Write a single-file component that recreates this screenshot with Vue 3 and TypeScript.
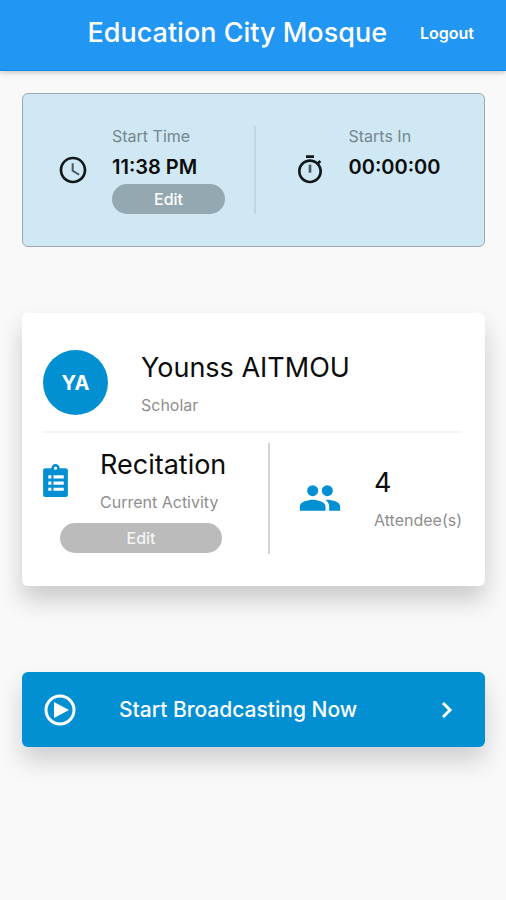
<script setup lang="ts">
import { ref } from 'vue'

const mosque = ref('Education City Mosque')
const startTime = ref('11:38 PM')
const countdown = ref('00:00:00')
const scholar = ref({ name: 'Younss AITMOU', initials: 'YA', role: 'Scholar' })
const activity = ref('Recitation')
const attendees = ref(4)
</script>

<template>
  <div class="screen">
    <header class="bar">
      <h1 class="title">{{ mosque }}</h1>
      <button class="logout" type="button">Logout</button>
    </header>

    <main class="content">
      <section class="schedule">
        <div class="slot">
          <svg class="icon" viewBox="0 0 24 24" aria-hidden="true">
            <path d="M11.99 2C6.47 2 2 6.48 2 12s4.47 10 9.99 10C17.52 22 22 17.52 22 12S17.52 2 11.99 2zM12 20c-4.42 0-8-3.58-8-8s3.58-8 8-8 8 3.58 8 8-3.58 8-8 8z" />
            <path class="hands" d="M12.5 7H11v6l5.25 3.15.75-1.23-4.5-2.67z" />
          </svg>
          <div class="details">
            <span class="caption">Start Time</span>
            <strong class="time">{{ startTime }}</strong>
            <button class="edit" type="button">Edit</button>
          </div>
        </div>
        <div class="slot second">
          <svg class="icon" viewBox="0 0 24 24" aria-hidden="true">
            <path d="M15 1H9v2h6V1zm4.03 6.39l1.42-1.42c-.43-.51-.9-.99-1.41-1.41l-1.42 1.42C16.07 4.74 14.12 4 12 4c-4.97 0-9 4.03-9 9s4.02 9 9 9 9-4.03 9-9c0-2.12-.74-4.07-1.97-5.61zM12 20c-3.87 0-7-3.13-7-7s3.13-7 7-7 7 3.13 7 7-3.13 7-7 7z" />
            <path class="hands" d="M11 8h2v6h-2z" />
          </svg>
          <div class="details">
            <span class="caption">Starts In</span>
            <strong class="time">{{ countdown }}</strong>
          </div>
        </div>
      </section>

      <section class="card">
        <div class="person">
          <span class="avatar">{{ scholar.initials }}</span>
          <div class="details">
            <h2 class="heading">{{ scholar.name }}</h2>
            <span class="caption grey">{{ scholar.role }}</span>
          </div>
        </div>
        <div class="stats">
          <div class="activity">
            <div class="activity-row">
              <svg class="clipboard" viewBox="0 0 24 32" aria-hidden="true">
                <path fill-rule="evenodd" d="M2 4h6a4 4 0 0 1 8 0h6a2 2 0 0 1 2 2v24a2 2 0 0 1-2 2H2a2 2 0 0 1-2-2V6a2 2 0 0 1 2-2zM12 2.500a1.500 1.500 0 1 0 0 3 1.500 1.500 0 0 0 0-3zM5 11h3v3H5zM10 11h10v3H10zM5 17h3v3H5zM10 17h10v3H10zM5 23h3v3H5zM10 23h10v3H10z" />
              </svg>
              <div class="details">
                <h2 class="heading">{{ activity }}</h2>
                <span class="caption grey">Current Activity</span>
              </div>
            </div>
            <button class="edit wide" type="button">Edit</button>
          </div>
          <div class="attendance">
            <svg class="people" viewBox="0 0 24 24" aria-hidden="true">
              <circle cx="8" cy="8" r="3" />
              <circle cx="16" cy="8" r="3" />
              <path d="M8 13c-2.33 0-7 1.17-7 3.5V19h14v-2.5c0-2.33-4.67-3.5-7-3.5zm8 0c-.29 0-.62.02-.97.05 1.16.84 1.97 1.97 1.97 3.45V19h6v-2.5c0-2.33-4.67-3.5-7-3.5z" />
            </svg>
            <div class="details">
              <h2 class="heading">{{ attendees }}</h2>
              <span class="caption grey">Attendee(s)</span>
            </div>
          </div>
        </div>
      </section>

      <button class="broadcast" type="button">
        <svg class="play" viewBox="0 0 32 32" aria-hidden="true">
          <circle cx="16" cy="16" r="14" />
          <path d="M10 8v16l15-8z" />
        </svg>
        <span class="broadcast-label">Start Broadcasting Now</span>
        <svg class="chevron" viewBox="0 0 12 18" aria-hidden="true">
          <path d="M2 2l7 7-7 7" />
        </svg>
      </button>
    </main>
  </div>
</template>

<style>
body {
  margin: 0;
  background: #f9f9f9;
}
</style>

<style scoped>
.screen {
  min-height: 100vh;
  background: #f9f9f9;
  color: #0c0c0c;
  font-family: Inter, "Liberation Sans", sans-serif;
}

button {
  border: 0;
  padding: 0;
  font-family: inherit;
  color: #fff;
  cursor: pointer;
}

.bar {
  display: flex;
  align-items: center;
  justify-content: flex-end;
  gap: 33px;
  box-sizing: border-box;
  height: 71px;
  padding: 0 32px 4px;
  background: #2196f3;
  border-bottom: 1px solid #0f86e8;
  box-shadow: 0 1px 6px rgba(0, 0, 0, 0.25);
}

.title {
  margin: 0;
  color: #fff;
  font-size: 27px;
  font-weight: 500;
  line-height: 34px;
}

.logout {
  background: none;
  font-size: 16px;
  font-weight: 600;
  line-height: 24px;
}

.content {
  display: flex;
  flex-direction: column;
  padding: 22px 21px 0 22px;
}

.schedule {
  display: grid;
  grid-template-columns: 1fr 1fr;
  padding: 32px 0;
  border: 1px solid #9fa8ac;
  border-radius: 6px;
  background: #cfe8f3;
}

.slot {
  display: flex;
  gap: 23px;
  min-height: 88px;
  padding-left: 34px;
}

.second {
  padding-left: 38px;
  border-left: 2px solid #bfd7e1;
}

.icon {
  width: 32px;
  height: 32px;
  margin-top: 28px;
  fill: #10181c;
}

.hands {
  fill: #4a575d;
}

.details {
  display: flex;
  flex-direction: column;
  align-items: flex-start;
}

.caption {
  color: #76868e;
  font-size: 16px;
  line-height: 20px;
}

.grey {
  color: #8e8e8e;
}

.time {
  margin-top: 8px;
  font-size: 20px;
  font-weight: 600;
  line-height: 26px;
}

.edit {
  width: 113px;
  height: 30px;
  margin-top: 4px;
  border-radius: 15px;
  background: #94a8b1;
  font-size: 16px;
  font-weight: 500;
}

.card {
  margin-top: 66px;
  padding: 37px 23px 32px 21px;
  border-radius: 6px;
  background: #fff;
  box-shadow: 0 14px 24px rgba(0, 0, 0, 0.19);
}

.person {
  display: flex;
  gap: 33px;
  padding-bottom: 16px;
  border-bottom: 2px solid #f4f4f4;
}

.avatar {
  display: grid;
  place-items: center;
  width: 65px;
  height: 65px;
  border-radius: 50%;
  background: #0290d3;
  color: #fff;
  font-size: 20px;
  font-weight: 700;
}

.heading {
  margin: 0;
  font-size: 27px;
  font-weight: 400;
  line-height: 36px;
}

.heading + .caption {
  margin-top: 9px;
}

.stats {
  display: flex;
  margin-top: 10px;
}

.activity {
  flex: 1;
  min-height: 111px;
  border-right: 2px solid #d4d4d4;
}

.activity-row {
  display: flex;
  gap: 32px;
  padding-top: 4px;
}

.clipboard {
  width: 25px;
  height: 33px;
  margin-top: 17px;
  fill: #0290d3;
}

.wide {
  display: block;
  width: 162px;
  margin: 11px 0 0 17px;
  background: #bbb;
  color: #f4f4f4;
}

.attendance {
  display: flex;
  gap: 32px;
  padding: 22px 0 0 28px;
}

.people {
  width: 44px;
  height: 44px;
  margin-top: 11px;
  fill: #0290d3;
}

.broadcast {
  display: flex;
  align-items: center;
  height: 75px;
  margin-top: 86px;
  padding: 0 32px 0 22px;
  border-radius: 6px;
  background: #0290d3;
  box-shadow: 0 14px 24px rgba(0, 0, 0, 0.17);
}

.play {
  width: 32px;
  height: 32px;
  fill: #fff;
}

.play circle {
  fill: none;
  stroke: #fff;
  stroke-width: 3;
}

.broadcast-label {
  flex: 1;
  margin-left: 43px;
  text-align: left;
  font-size: 21px;
  font-weight: 500;
}

.chevron {
  width: 12px;
  height: 18px;
  fill: none;
  stroke: #fff;
  stroke-width: 3;
}
</style>
